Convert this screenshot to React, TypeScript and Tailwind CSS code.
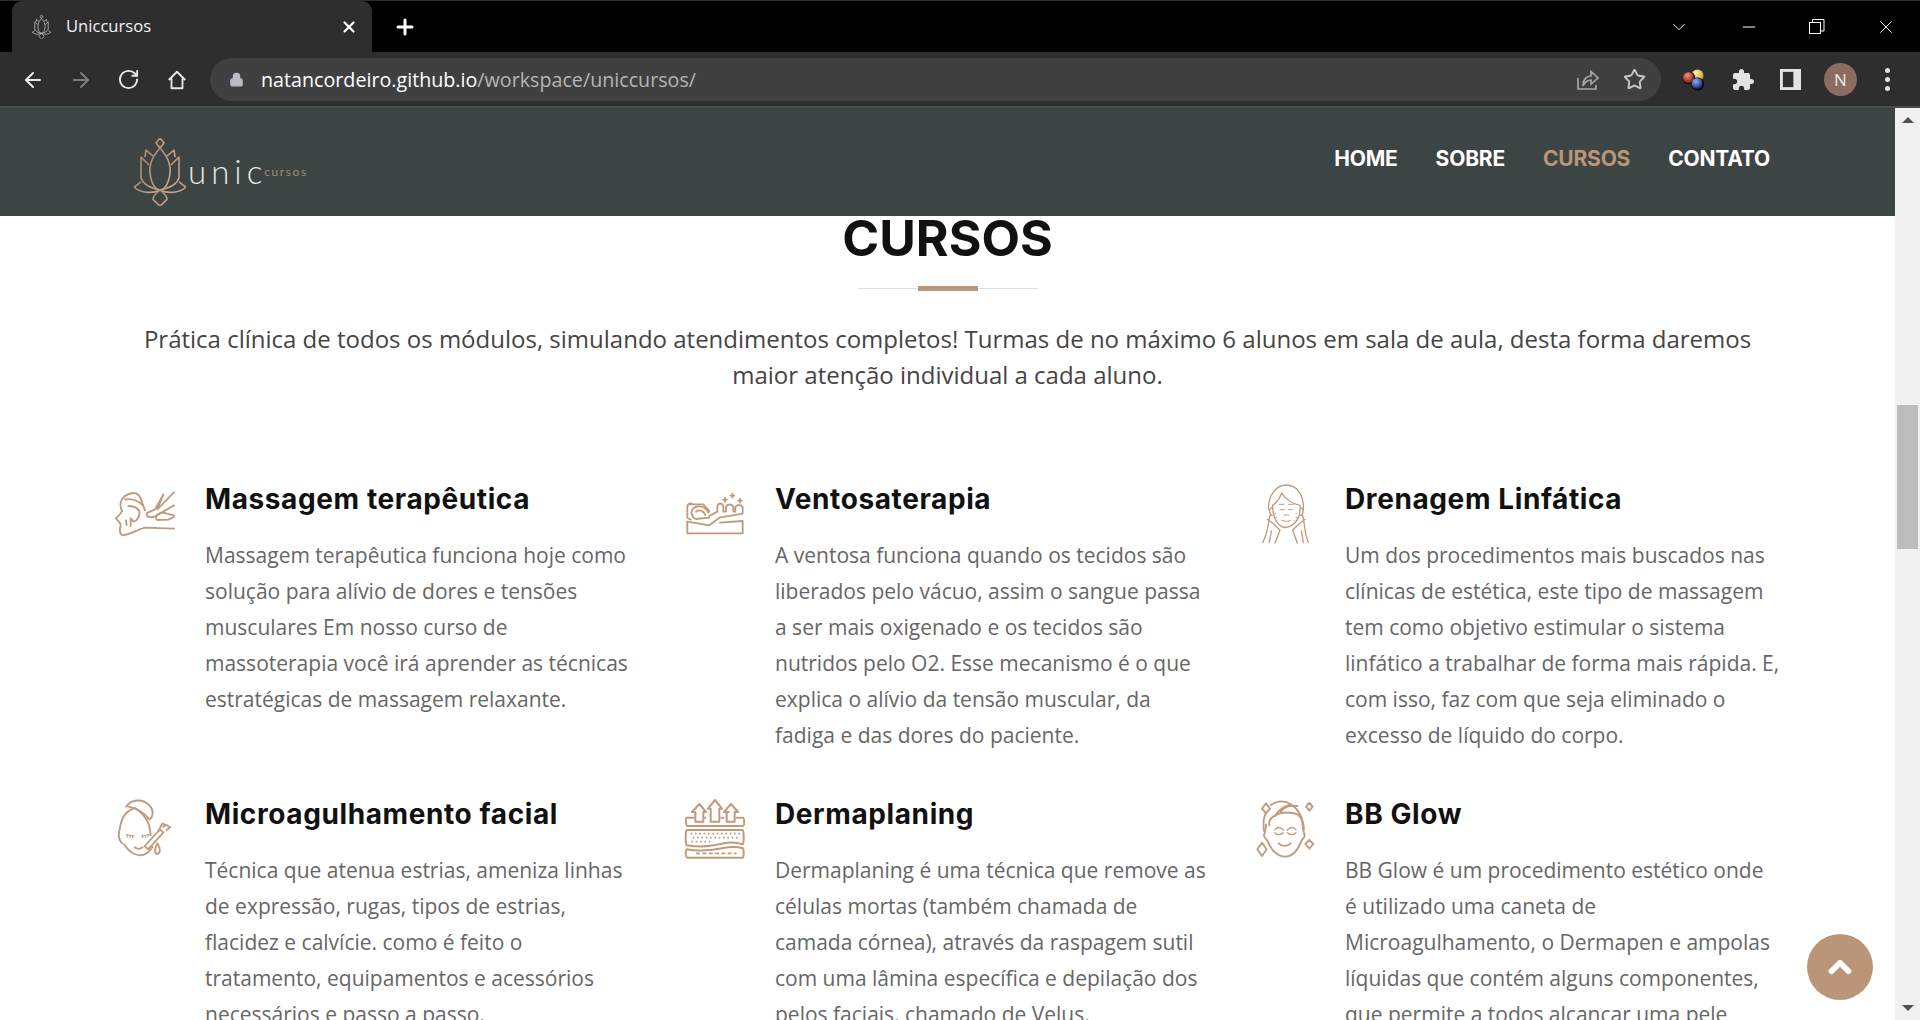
import React from "react";
import { ArrowLeft, ArrowRight, RotateCw, Star, Lock, X, Plus, ChevronDown, Minus, ChevronUp } from "lucide-react";

const TAN = "#c09a7c";

function Lotus({ stroke, className, sw = 1.6 }: { stroke: string; className?: string; sw?: number }) {
  return (
    <svg viewBox="0 0 52 68" className={className} fill="none" stroke={stroke} strokeWidth={sw} strokeLinejoin="round">
      <path d="M26 0 L30 5 L26 10 L22 5 Z" />
      <path d="M26 10 C17 20 13 30 18 44 C20 50 24 52 26 52 C28 52 32 50 34 44 C39 30 35 20 26 10 Z" />
      <path d="M19 18 L12 12 L11 19 M33 18 L40 12 L41 19" />
      <path d="M15 27 L7 19 L7 40 C9 46 16 50 26 52 C36 50 43 46 45 40 L45 19 L37 27" />
      <path d="M7 44 C4 46 2 48 0 49 C6 55 18 56 26 52 C34 56 46 55 52 49 C50 48 48 46 45 44" />
      <path d="M26 52 C21 56 19 59 19 61 C21 64 24 66 26 68 C28 66 31 64 33 61 C33 59 31 56 26 52 Z" />
    </svg>
  );
}

function IconSvg({ children }: { children: React.ReactNode }) {
  return (
    <svg viewBox="0 0 300 270" className="w-[100px] h-[90px] shrink-0 mr-[5px]" fill="none" stroke={TAN} strokeWidth={5.5} strokeLinecap="round" strokeLinejoin="round">
      {children}
    </svg>
  );
}

const Massage = () => (
  <IconSvg>
    <g transform="translate(0,-30)">
      <path d="M66 150 C54 125 66 100 100 96 C120 94 122 115 135 148" />
      <path d="M75 115 C95 112 115 120 128 132" />
      <path d="M66 150 C62 160 54 165 48 172 C52 180 60 182 62 192 C58 208 58 220 68 223 C95 218 115 205 135 200 L222 203" />
      <path d="M85 135 C100 135 112 140 118 150 C120 165 112 180 100 182 L92 172 L92 195" />
      <path d="M78 178 L80 192" />
      <path d="M222 94 L172 145 L190 100 L165 145 L143 155 C134 166 148 172 165 166 L222 133" />
      <path d="M222 163 L190 155 C172 155 162 170 172 177 L205 176 L222 168" />
    </g>
  </IconSvg>
);

const Vento = () => (
  <IconSvg>
    <path d="M52 152 L52 187 L218 187 L218 150 L150 155" />
    <path d="M52 152 L118 163 L148 140 L218 128 L218 108 C214 100 200 100 196 108 L196 122 L190 122 L190 108 C186 98 172 98 168 108 L168 122 L160 122 L160 105 C156 95 146 95 142 105 L142 122 L118 135" />
    <path d="M115 125 C108 106 85 100 70 112 C60 122 66 140 78 144 L118 140" />
    <path d="M60 100 L100 100 L118 120 M52 108 C52 98 62 94 68 100 M52 108 L52 140 L62 146" />
    <path d="M78 122 C88 114 102 120 106 132" />
    <path d="M165 80 V92 M159 86 H171 M187 68 V80 M181 74 H193 M210 83 V95 M204 89 H216" />
  </IconSvg>
);

const Drenagem = () => (
  <IconSvg>
    <path d="M85 115 C85 65 115 42 138 42 C170 42 192 70 190 115" strokeWidth={4} />
    <path d="M98 103 C110 95 120 80 125 66 C140 90 165 100 180 103 C182 125 178 145 160 160 C145 172 130 172 118 162 C105 150 98 130 98 103 Z" strokeWidth={4} />
    <path d="M118 100 H132 M146 100 H160 M120 116 H132 M146 116 H158 M132 132 H146" strokeWidth={3} />
    <path d="M125 148 C135 152 145 152 152 148" strokeWidth={3} />
    <path d="M96 110 C86 112 86 128 96 134 M182 110 C192 112 192 128 182 134" strokeWidth={4} />
    <path d="M105 128 H110 M103 140 H110 M108 150 H113 M168 128 H173 M168 140 H175 M163 150 H170" strokeWidth={3} strokeDasharray="2 4" />
    <path d="M92 130 C82 150 88 180 68 214 M82 145 L102 160 L120 178 L105 216 M94 180 L88 214" strokeWidth={4} />
    <path d="M186 130 C196 150 190 180 205 214 M195 145 L176 160 L158 178 L172 216 M184 180 L190 214" strokeWidth={4} />
  </IconSvg>
);

const Micro = () => (
  <IconSvg>
    <path d="M60 125 C55 140 55 160 66 172" />
    <path d="M60 125 C65 90 85 72 105 66 C140 90 150 115 152 148" />
    <path d="M78 62 C95 38 130 38 148 58 C162 72 160 90 150 100 M85 62 C108 66 130 78 148 100" />
    <path d="M72 175 C85 195 100 208 120 208 C135 208 148 198 158 182" />
    <path d="M78 146 L102 150 M82 146 V154 M90 147 V155 M98 148 V156 M124 150 L148 146 M128 150 V156 M136 149 V155 M144 147 V153" strokeWidth={3} />
    <path d="M104 184 C112 190 120 190 128 184" />
    <path d="M134 180 L180 130 L190 140 L144 190 Z" />
    <path d="M176 134 L186 114 C192 110 196 118 190 122 L198 116 L210 124 L200 132" />
    <path d="M172 172 C164 188 162 200 172 204 C182 200 182 188 172 172 Z" />
  </IconSvg>
);

const Derma = () => (
  <IconSvg>
    <g strokeWidth={6}>
      <path d="M70 95 L50 95 C46 95 48 120 52 120 L218 120 C224 120 224 95 218 95 L200 95" />
      <path d="M100 95 L106 95 M154 95 L160 95 M70 78 H66 L88 54 L108 78 H100 V107 H76 V78" />
      <path d="M122 68 H114 L135 42 L156 68 H148 V107 H122 Z" />
      <path d="M176 78 H162 L183 54 L204 78 H194 V107 H170 V78" />
      <path d="M50 132 H218 C222 135 222 172 218 175 C190 165 170 170 130 178 C100 184 75 182 50 178 C46 172 46 136 50 132 Z" />
      <path d="M50 190 C90 198 130 192 160 186 C180 182 200 182 218 186 C222 192 222 212 218 215 H52 C46 212 46 195 50 190 Z" />
    </g>
    <path d="M62 143 H212 M68 155 H208 M64 167 H128" strokeWidth={5} strokeDasharray="5 8" strokeLinecap="butt" />
    <path d="M78 202 H200" strokeWidth={5} strokeDasharray="12 7" strokeLinecap="butt" />
  </IconSvg>
);

const Glow = () => (
  <IconSvg>
    <path d="M78 115 C78 140 72 140 72 150 C76 160 82 160 85 170 C95 195 115 212 135 212 C155 212 172 195 182 170 C185 160 190 160 194 150 C194 140 188 140 188 115" />
    <path d="M72 135 C68 100 72 90 78 82 M92 58 C130 30 185 55 192 130" />
    <path d="M88 118 C85 100 100 88 120 82 C140 78 160 80 172 85 C182 92 188 105 188 118 M120 82 C130 62 145 58 172 60 M105 90 C115 72 130 62 150 56" />
    <path d="M104 132 C110 122 122 122 130 132 M142 132 C150 122 162 122 168 132 M104 140 C110 148 122 148 130 140 M142 140 C150 148 162 148 168 140" strokeWidth={4} />
    <path d="M116 172 C126 182 142 182 152 172" />
    <path d="M78 52 L90 68 L78 82 L66 68 Z M208 50 L218 62 L208 74 L198 62 Z M208 162 L220 174 L208 188 L196 174 Z M66 170 L80 190 L66 210 L52 190 Z" />
  </IconSvg>
);

type Course = { title: string; icon: React.ReactNode; lines: string[] };

const courses: Course[] = [
  { title: "Massagem terapêutica", icon: <Massage />, lines: ["Massagem terapêutica funciona hoje como", "solução para alívio de dores e tensões", "musculares Em nosso curso de", "massoterapia você irá aprender as técnicas", "estratégicas de massagem relaxante."] },
  { title: "Ventosaterapia", icon: <Vento />, lines: ["A ventosa funciona quando os tecidos são", "liberados pelo vácuo, assim o sangue passa", "a ser mais oxigenado e os tecidos são", "nutridos pelo O2. Esse mecanismo é o que", "explica o alívio da tensão muscular, da", "fadiga e das dores do paciente."] },
  { title: "Drenagem Linfática", icon: <Drenagem />, lines: ["Um dos procedimentos mais buscados nas", "clínicas de estética, este tipo de massagem", "tem como objetivo estimular o sistema", "linfático a trabalhar de forma mais rápida. E,", "com isso, faz com que seja eliminado o", "excesso de líquido do corpo."] },
  { title: "Microagulhamento facial", icon: <Micro />, lines: ["Técnica que atenua estrias, ameniza linhas", "de expressão, rugas, tipos de estrias,", "flacidez e calvície. como é feito o", "tratamento, equipamentos e acessórios", "necessários e passo a passo."] },
  { title: "Dermaplaning", icon: <Derma />, lines: ["Dermaplaning é uma técnica que remove as", "células mortas (também chamada de", "camada córnea), através da raspagem sutil", "com uma lâmina específica e depilação dos", "pelos faciais, chamado de Velus."] },
  { title: "BB Glow", icon: <Glow />, lines: ["BB Glow é um procedimento estético onde", "é utilizado uma caneta de", "Microagulhamento, o Dermapen e ampolas", "líquidas que contém alguns componentes,", "que permite a todos alcançar uma pele"] },
];

function Balls() {
  return (
    <svg viewBox="0 0 24 24" className="w-[24px] h-[24px]">
      <defs>
        <radialGradient id="by" cx="40%" cy="30%" r="70%"><stop offset="0%" stopColor="#fff3b0" /><stop offset="100%" stopColor="#c69a20" /></radialGradient>
        <radialGradient id="br" cx="40%" cy="30%" r="70%"><stop offset="0%" stopColor="#f09080" /><stop offset="100%" stopColor="#8c1c10" /></radialGradient>
        <radialGradient id="bb" cx="40%" cy="30%" r="70%"><stop offset="0%" stopColor="#90b0f0" /><stop offset="100%" stopColor="#10286c" /></radialGradient>
      </defs>
      <circle cx="15.5" cy="7.5" r="6" fill="url(#by)" />
      <circle cx="7" cy="10" r="6.2" fill="#000" />
      <circle cx="6.5" cy="9.5" r="5.5" fill="url(#br)" />
      <circle cx="15.5" cy="16" r="6.5" fill="#000" />
      <circle cx="15" cy="15.5" r="5.6" fill="url(#bb)" />
    </svg>
  );
}

export default function App() {
  return (
    <div className="relative w-full h-screen overflow-hidden flex flex-col bg-white font-['Open_Sans',sans-serif]">
      {/* tab strip */}
      <div className="h-[52px] shrink-0 bg-black border-t border-[#2b2b33] flex items-end text-white">
        <div className="ml-[12px] w-[360px] h-[51px] bg-[#2e2e2e] rounded-t-[10px] flex items-center pl-[18px] pr-[14px]">
          <Lotus stroke="#b5b5b5" sw={2.4} className="w-[23px] h-[24px] shrink-0" />
          <span className="ml-[13px] text-[16.6px] text-[#f2f2f2] flex-1">Uniccursos</span>
          <X size={18} strokeWidth={3} className="text-white" />
        </div>
        <div className="h-[51px] flex items-center ml-[21px]">
          <Plus size={24} strokeWidth={3} />
        </div>
        <div className="flex-1" />
        <div className="h-[51px] flex items-center pr-[23px] gap-[50px]">
          <ChevronDown size={22} strokeWidth={1} className="-mr-[1px]" />
          <Minus size={20} strokeWidth={1.2} />
          <svg viewBox="0 0 16 16" className="w-[16px] h-[16px]" fill="none" stroke="#fff" strokeWidth="1">
            <rect x="0.5" y="3.5" width="11" height="11" />
            <path d="M3.5 3.5 V0.5 H15 V12 H11.5" />
          </svg>
          <X size={22} strokeWidth={1} />
        </div>
      </div>

      {/* toolbar */}
      <div className="h-[56px] shrink-0 bg-[#2e2e2e] border-b-2 border-[#4d4d4d] flex items-center text-white pt-[1px]">
        <ArrowLeft size={24} strokeWidth={2} className="ml-[21px] text-[#e8e8e8]" />
        <ArrowRight size={24} strokeWidth={2} className="ml-[24px] text-[#7d7d7d]" />
        <RotateCw size={23} strokeWidth={2} className="ml-[24px] text-[#e8e8e8]" />
        <svg viewBox="0 0 24 24" className="ml-[26px] w-[22px] h-[22px]" fill="none" stroke="#e8e8e8" strokeWidth="2" strokeLinejoin="round">
          <path d="M3 12 L12 3 L21 12 M6 10 V21 H18 V10" />
        </svg>
        <div className="ml-[22px] w-[1451px] h-[43px] rounded-full bg-[#404040] flex items-center pl-[19px] pr-[15px]">
          <Lock size={15} fill="#b9bcc2" stroke="#b9bcc2" strokeWidth={2} className="shrink-0" />
          <span className="ml-[17px] text-[19.7px] text-white">natancordeiro.github.io<span className="text-[#b5b5b5]">/workspace/uniccursos/</span></span>
          <div className="flex-1" />
          <svg viewBox="0 0 24 24" className="w-[24px] h-[24px]" fill="none" stroke="#a8a8a8" strokeWidth="1.6">
            <path d="M3 10 V21 H21 V17 M8 18 C8 11 12 8 16 8 V3.5 L23 10 L16 16 V12 C12 12 10 14 8 18 Z" />
          </svg>
          <Star size={23} strokeWidth={2} className="ml-[24px] text-[#c8c8c8]" />
        </div>
        <div className="ml-[21px]"><Balls /></div>
        <svg viewBox="0 0 24 24" className="ml-[25px] w-[24px] h-[24px]" fill="#e3e3e3">
          <path d="M20.5 11H19V7c0-1.1-.9-2-2-2h-4V3.5C13 2.12 11.88 1 10.5 1S8 2.12 8 3.5V5H4c-1.1 0-1.99.9-1.99 2v3.8H3.5c1.49 0 2.7 1.21 2.7 2.7s-1.21 2.7-2.7 2.7H2V20c0 1.1.9 2 2 2h3.8v-1.5c0-1.49 1.21-2.7 2.7-2.7 1.49 0 2.7 1.21 2.7 2.7V22H17c1.1 0 2-.9 2-2v-4h1.5c1.38 0 2.5-1.12 2.5-2.5S21.88 11 20.5 11z" />
        </svg>
        <svg viewBox="0 0 22 22" className="ml-[25px] w-[21px] h-[21px]" fill="none" stroke="#e3e3e3" strokeWidth="3"><rect x="1.5" y="1.5" width="19" height="19" /><rect x="14" y="2" width="6" height="18" fill="#e3e3e3" stroke="none" /></svg>
        <div className="ml-[23px] w-[33px] h-[33px] rounded-full bg-[#8c6b60] flex items-center justify-center text-[17px] text-[#f1eae6]">N</div>
        <div className="ml-[28px] flex flex-col gap-[4px]">
          <span className="block w-[5px] h-[5px] rounded-full bg-[#e3e3e3]" />
          <span className="block w-[5px] h-[5px] rounded-full bg-[#e3e3e3]" />
          <span className="block w-[5px] h-[5px] rounded-full bg-[#e3e3e3]" />
        </div>
      </div>

      {/* page with scrollbar */}
      <div className="flex-1 min-h-0 flex">
        <div className="flex-1 min-w-0 flex flex-col overflow-hidden">
          <header className="h-[108px] shrink-0 bg-[#3d4544] flex items-start justify-between pl-[134px] pr-[125px]">
            <div className="mt-[30px] flex items-start">
              <svg viewBox="0 0 52 68" className="w-[52px] h-[68px]" fill="none">
                <defs>
                  <linearGradient id="lg" x1="0" y1="0" x2="1" y2="1">
                    <stop offset="0%" stopColor="#a88a72" />
                    <stop offset="100%" stopColor="#d0a98a" />
                  </linearGradient>
                </defs>
                <Lotus stroke="url(#lg)" />
              </svg>
              <span className="ml-[2px] mt-[15px] text-[33px] leading-[36px] font-['Lato',sans-serif] font-light tracking-[5px] text-[#e8e6e0]">unic</span>
              <span className="-ml-[3px] mt-[26px] text-[12px] leading-[16px] tracking-[1.6px] text-[#a08a74] font-['Lato',sans-serif]">cursos</span>
            </div>
            <nav className="mt-[39px] flex gap-[38px] text-[21px] leading-[24px] font-bold font-['Inter',sans-serif] text-white tracking-[-0.2px]">
              <span>HOME</span>
              <span>SOBRE</span>
              <span className="text-[#bb9577]">CURSOS</span>
              <span>CONTATO</span>
            </nav>
          </header>

          <main className="flex-1 min-h-0 overflow-hidden">
            <h2 className="text-center text-[50px] leading-[44px] font-bold font-['Inter',sans-serif] text-[#111111]">CURSOS</h2>
            <div className="mt-[26px] mx-auto w-[180px] h-[5px] flex items-center justify-center bg-[linear-gradient(#dddddd,#dddddd)] bg-no-repeat bg-center bg-[length:100%_1px]">
              <div className="w-[60px] h-[5px] bg-[#bb9577]" />
            </div>
            <p className="mt-[30px] mx-auto w-[1660px] text-center text-[24px] leading-[36px] text-[#444444]">
              Prática clínica de todos os módulos, simulando atendimentos completos! Turmas de no máximo 6 alunos em sala de aula, desta forma daremos maior atenção individual a cada aluno.
            </p>
            <div className="mt-[78px] ml-[100px] grid grid-cols-[570px_570px_570px] auto-rows-[315px]">
              {courses.map((c) => (
                <div key={c.title} className="flex items-start">
                  {c.icon}
                  <div className="min-w-0">
                    <h4 className="mt-[11px] text-[28px] leading-[34px] tracking-[0.6px] font-bold font-['Inter',sans-serif] text-[#111111]">{c.title}</h4>
                    <p className="mt-[21px] text-[21px] leading-[36px] text-[#666666] whitespace-nowrap">
                      {c.lines.map((l) => (
                        <span key={l} className="block">{l}</span>
                      ))}
                    </p>
                  </div>
                </div>
              ))}
            </div>
          </main>
        </div>

        {/* scrollbar */}
        <div className="w-[25px] shrink-0 bg-[#f1f1f1] flex flex-col items-center">
          <div className="mt-[9px] w-0 h-0 border-l-[6px] border-r-[6px] border-b-[6px] border-l-transparent border-r-transparent border-b-[#505050]" />
          <div className="mt-[282px] w-[21px] h-[144px] bg-[#bcbcbc]" />
          <div className="flex-1" />
          <div className="mb-[9px] w-0 h-0 border-l-[6px] border-r-[6px] border-t-[6px] border-l-transparent border-r-transparent border-t-[#505050]" />
        </div>
      </div>

      {/* back to top */}
      <div className="absolute left-[1807px] top-[934px] w-[66px] h-[66px] rounded-full bg-[#bb9577] flex items-center justify-center">
        <ChevronUp size={34} strokeWidth={4} className="text-white" />
      </div>
    </div>
  );
}
